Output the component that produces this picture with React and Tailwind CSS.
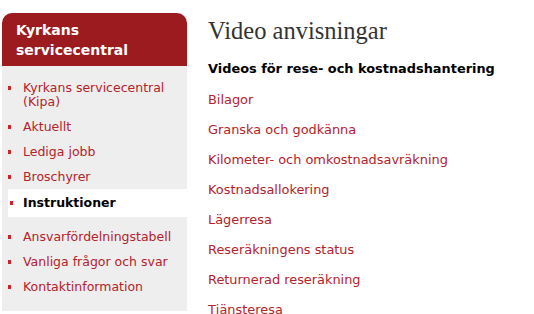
const menu = [
    { label: ["Kyrkans servicecentral", "(Kipa)"] },
    { label: ["Aktuellt"] },
    { label: ["Lediga jobb"] },
    { label: ["Broschyrer"] },
    { label: ["Instruktioner"], active: true },
    { label: ["Ansvarfördelningstabell"] },
    { label: ["Vanliga frågor och svar"] },
    { label: ["Kontaktinformation"] },
]

const videos = [
    "Bilagor",
    "Granska och godkänna",
    "Kilometer- och omkostnadsavräkning",
    "Kostnadsallokering",
    "Lägerresa",
    "Reseräkningens status",
    "Returnerad reseräkning",
    "Tjänsteresa",
]

const MenuItem = ({ item }) => {
    if (item.active) {
        return (
            <li className="relative mt-0 mb-[7px] ml-[6px] bg-white pt-[7px] pb-[7px] pl-[15px] font-bold text-black">
                <span className="absolute left-[2px] top-[12px] h-[4px] w-[3px] bg-[#c8252c]" />
                {item.label[0]}
            </li>
        )
    }
    return (
        <li className="relative pt-[6px] pb-[5px] pl-[21px] text-[#b2232a]">
            <span className="absolute left-[6px] top-[11px] h-[4px] w-[3px] bg-[#c8252c]" />
            {item.label.map(l => <div key={l}>{l}</div>)}
        </li>
    )
}

export default function App() {
    return (
        <div className="flex h-[314px] w-[534px] overflow-hidden bg-white text-[12.5px] leading-[14px]" style={{ fontFamily: '"DejaVu Sans", Verdana, sans-serif' }}>
            <aside className="ml-[2px] mt-[13px] flex w-[185px] shrink-0 flex-col">
                <div className="h-[53px] rounded-t-[10px] bg-[#9b1b1f] pl-[14px] pt-[7px] text-[14px] font-bold leading-[20px] text-white">
                    Kyrkans<br />servicecentral
                </div>
                <ul className="h-[245px] bg-[#eeeeee] pt-[9px]">
                    {menu.map(item => <MenuItem key={item.label[0]} item={item} />)}
                </ul>
            </aside>
            <main className="ml-[21px] pt-[15px] text-[12.9px]">
                <h1 className="text-[24.5px] leading-[32px] text-[#333333]" style={{ fontFamily: '"Liberation Serif", "Times New Roman", serif' }}>
                    Video anvisningar
                </h1>
                <h2 className="mt-[15px] font-bold text-black">Videos för rese- och kostnadshantering</h2>
                <ul className="mt-[17px] flex flex-col gap-[16px]">
                    {videos.map(v => <li key={v} className="text-[#b2232a]">{v}</li>)}
                </ul>
            </main>
        </div>
    )
}
